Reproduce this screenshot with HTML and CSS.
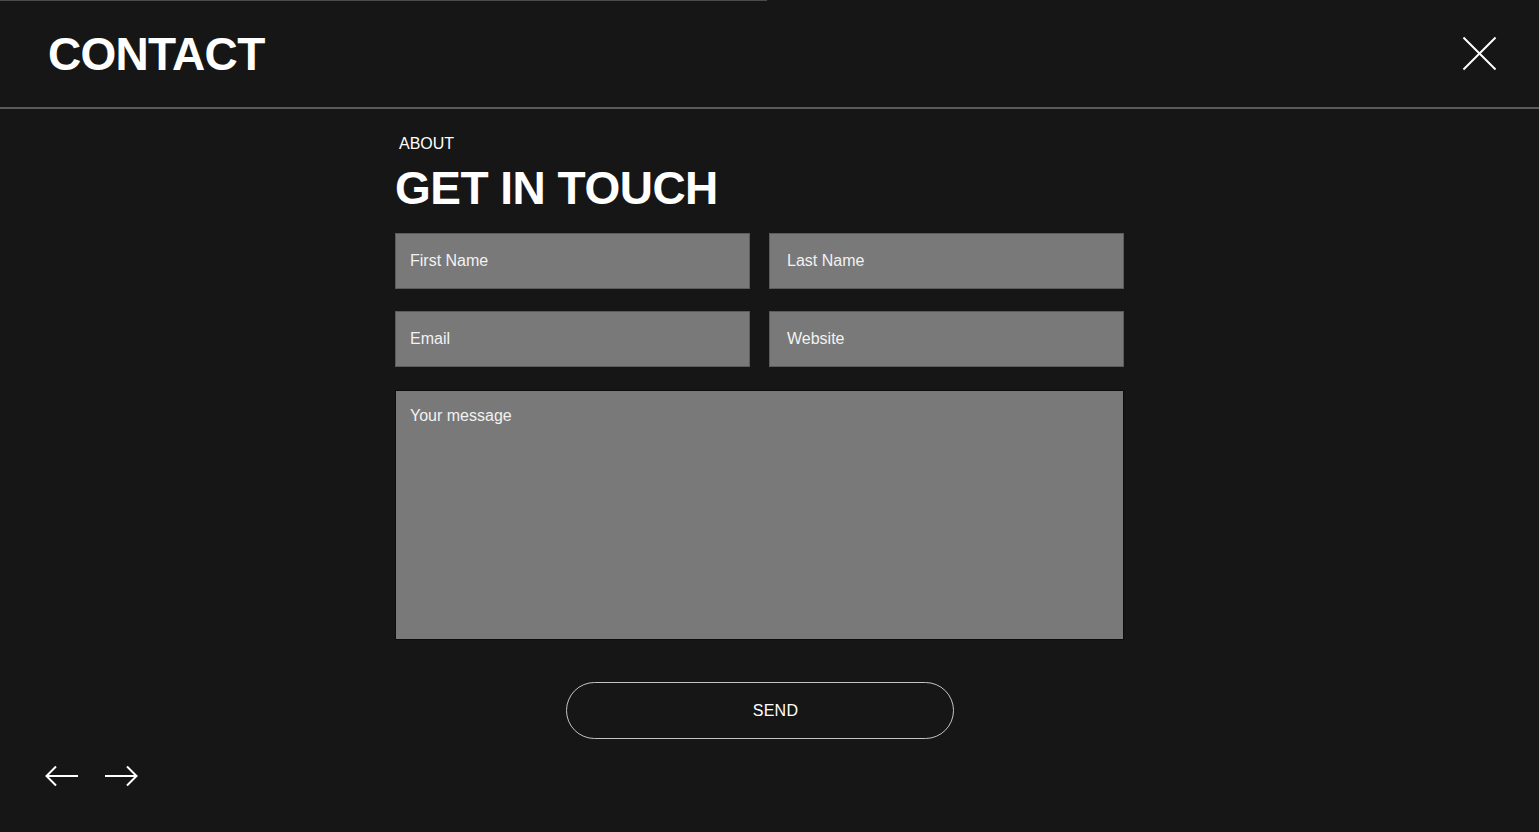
FILE: index.html
```html
<!DOCTYPE html>
<html lang="en">
<head>
<meta charset="utf-8">
<title>Contact</title>
<link rel="stylesheet" href="styles.css">
</head>
<body>
<div class="page">
  <div class="progress"></div>
  <header class="header">
    <h1 class="title">CONTACT</h1>
    <button class="close" aria-label="Close">
      <svg width="36" height="36" viewBox="0 0 36 36"><path d="M1.5 1.5L34.5 34.5M34.5 1.5L1.5 34.5" stroke="#fff" stroke-width="2" fill="none"/></svg>
    </button>
  </header>
  <main class="main">
    <div class="form-wrap">
      <div class="eyebrow">ABOUT</div>
      <h2 class="heading">GET IN TOUCH</h2>
      <form class="form">
        <div class="grid">
          <input class="field" type="text" placeholder="First Name">
          <input class="field field-right" type="text" placeholder="Last Name">
          <input class="field" type="email" placeholder="Email">
          <input class="field field-right" type="text" placeholder="Website">
        </div>
        <textarea class="message" placeholder="Your message"></textarea>
        <div class="actions">
          <button type="button" class="send">SEND</button>
        </div>
      </form>
    </div>
  </main>
  <nav class="nav">
    <button class="arrow" aria-label="Previous">
      <svg width="34" height="22" viewBox="0 0 34 22"><path d="M33 11H2M11 1.5L1.5 11L11 20.5" stroke="#fff" stroke-width="2" fill="none"/></svg>
    </button>
    <button class="arrow" aria-label="Next">
      <svg width="34" height="22" viewBox="0 0 34 22"><path d="M1 11H32M23 1.5L32.5 11L23 20.5" stroke="#fff" stroke-width="2" fill="none"/></svg>
    </button>
  </nav>
</div>
</body>
</html>
```

FILE: styles.css
```css
* { box-sizing: border-box; }
html, body { margin: 0; padding: 0; }
body {
  background: #161616;
  color: #fff;
  font-family: "Liberation Sans", Arial, Helvetica, sans-serif;
}
.page {
  height: 832px;
  display: flex;
  flex-direction: column;
  overflow: hidden;
}
.progress {
  width: 767px;
  height: 1px;
  background: #4a4a4a;
  flex: none;
}
.header {
  height: 108px;
  border-bottom: 2px solid #5a5a5a;
  display: flex;
  align-items: center;
  justify-content: space-between;
  padding: 0 42px 2px 48px;
  flex: none;
}
.title {
  margin: 0;
  font-size: 46px;
  font-weight: 700;
  line-height: 1;
  letter-spacing: -0.7px;
  color: #fff;
  position: relative;
  top: 1px;
}
.close {
  background: none;
  border: 0;
  padding: 0;
  width: 35px;
  height: 35px;
  display: block;
  cursor: pointer;
}
.close svg { display: block; width: 35px; height: 35px; }
.main {
  padding-left: 395px;
  padding-top: 24px;
}
.form-wrap { width: 729px; }
.eyebrow {
  font-size: 16px;
  line-height: 22px;
  padding-left: 4px;
  color: #fff;
}
.heading {
  margin: 6px 0 0 0;
  font-size: 46px;
  font-weight: 700;
  line-height: 55px;
  letter-spacing: -0.5px;
  color: #fff;
}
.form { margin-top: 17px; }
.grid {
  display: grid;
  grid-template-columns: 355px 355px;
  column-gap: 19px;
  row-gap: 22px;
}
.field, .message {
  font-family: "Liberation Sans", Arial, Helvetica, sans-serif;
  font-size: 16px;
  color: #fff;
  background: #797979;
  outline: none;
}
.field {
  height: 56px;
  border: 1px solid #5c5c5c;
  padding: 0 14px;
}
.field-right { padding-left: 17px; }
.field::placeholder, .message::placeholder { color: #f2f2f2; opacity: 1; }
.message {
  display: block;
  margin-top: 23px;
  width: 729px;
  height: 250px;
  border: 1px solid #0c0c0c;
  padding: 16px 14px;
  resize: none;
}
.actions {
  display: flex;
  justify-content: center;
  margin-top: 42px;
}
.send {
  width: 388px;
  height: 57px;
  border: 1px solid #c4c4c4;
  border-radius: 29px;
  background: transparent;
  color: #fff;
  font-family: "Liberation Sans", Arial, Helvetica, sans-serif;
  font-size: 16px;
  letter-spacing: 0.3px;
  padding: 0 0 0 32px;
  cursor: pointer;
}
.nav {
  display: flex;
  gap: 25px;
  padding-left: 45px;
  margin-top: 26px;
}
.arrow {
  background: none;
  border: 0;
  padding: 0;
  cursor: pointer;
}
.arrow svg { display: block; }
```
